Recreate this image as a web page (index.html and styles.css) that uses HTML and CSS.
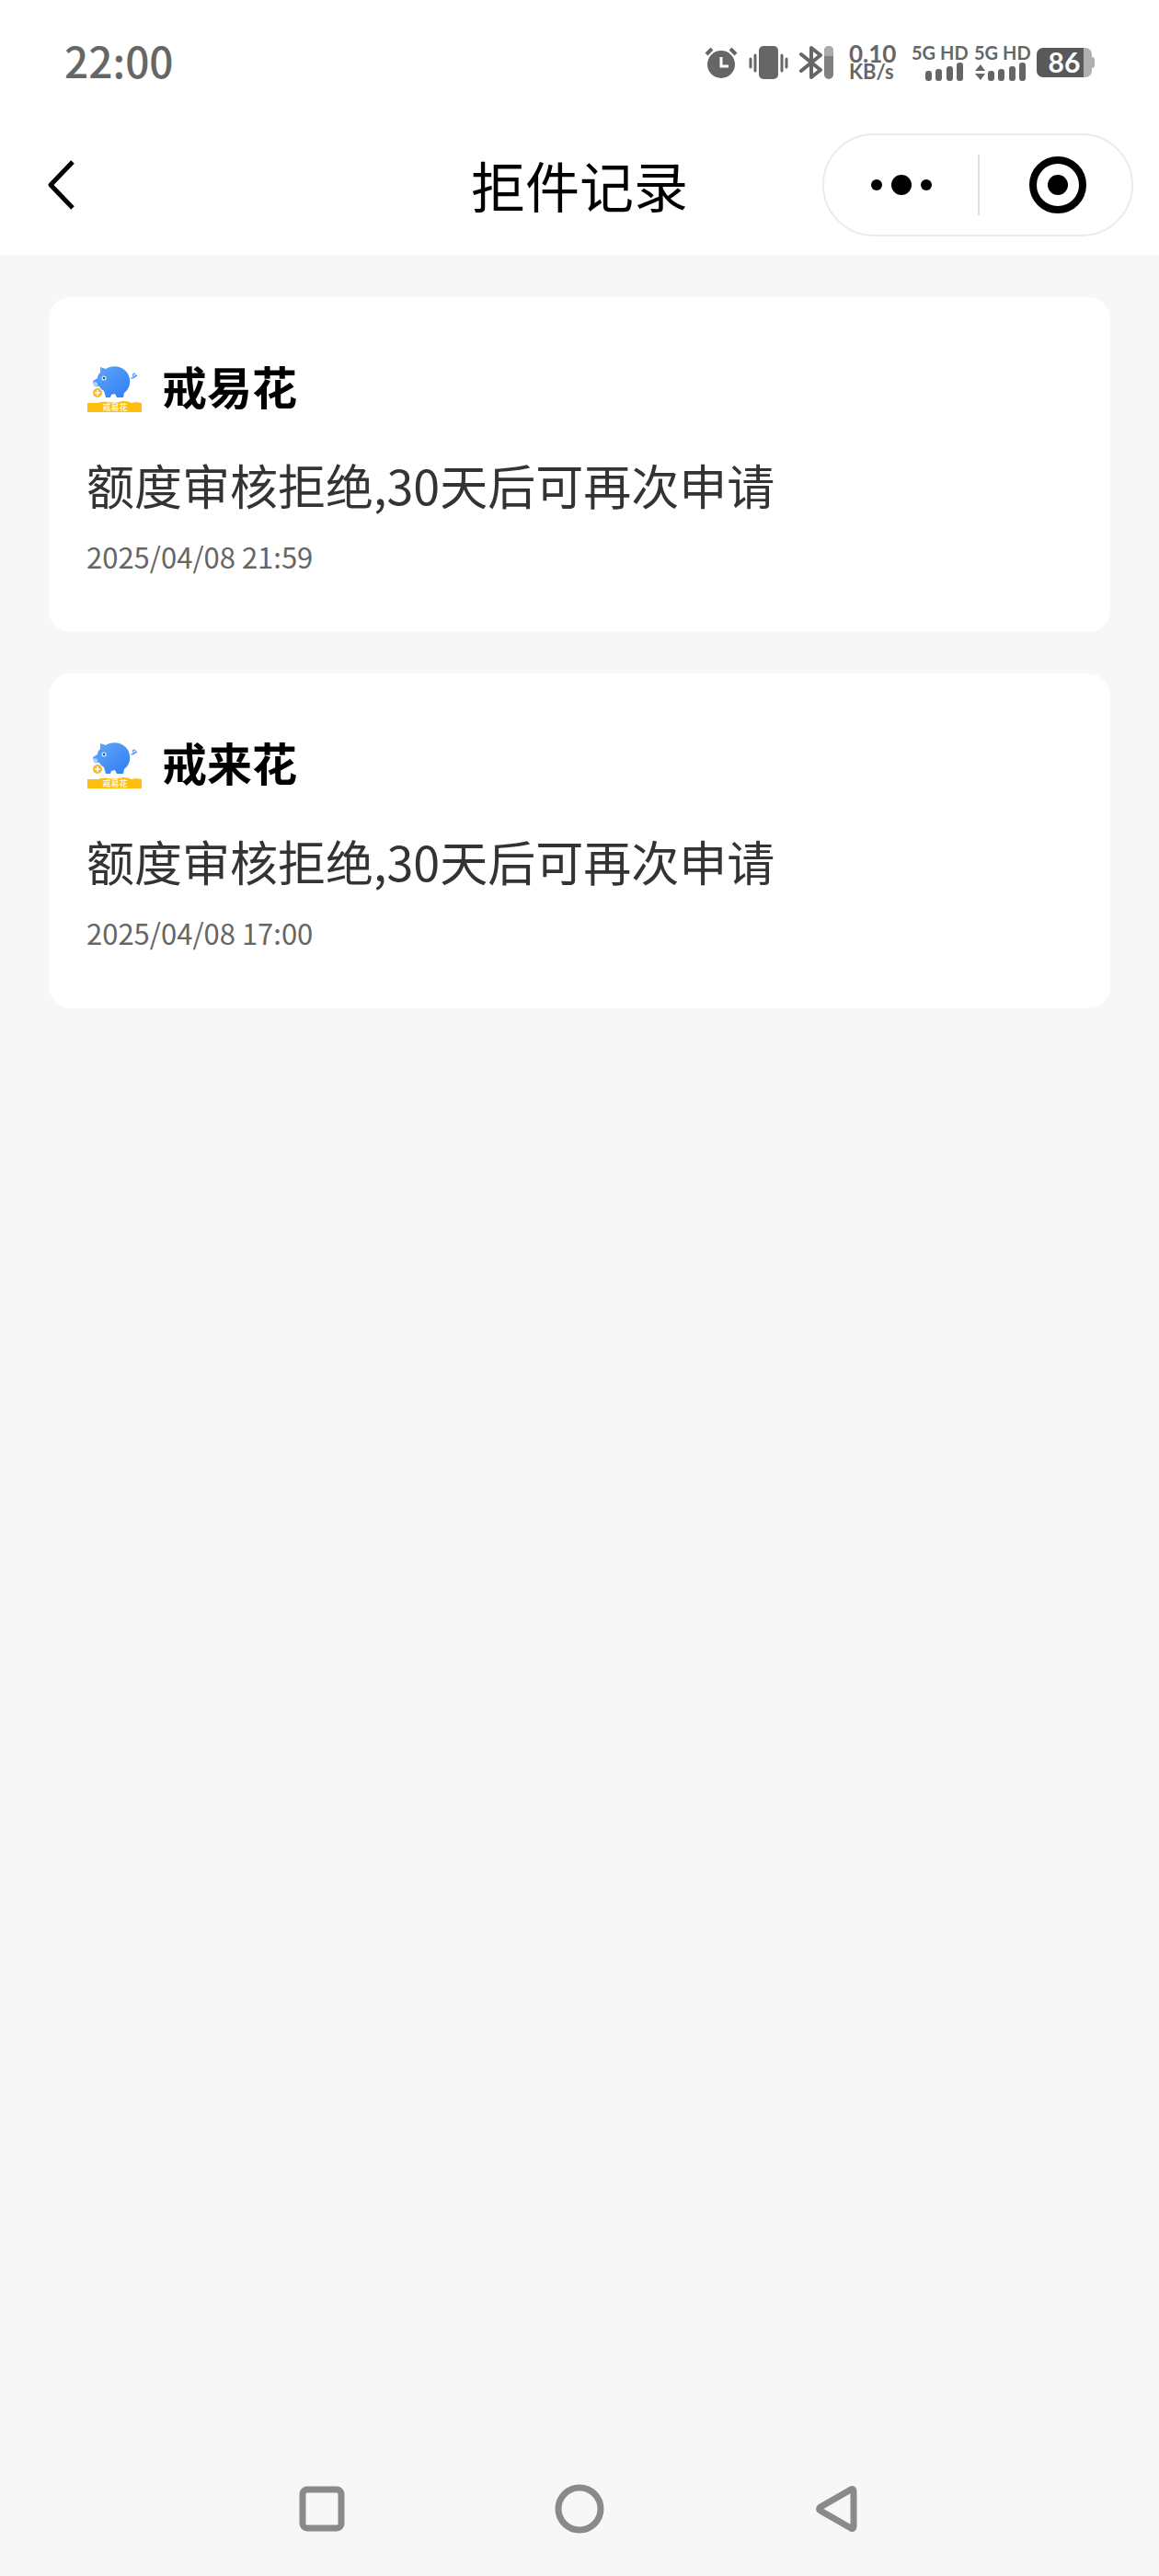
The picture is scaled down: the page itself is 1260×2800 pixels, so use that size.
FILE: index.html
```html
<!DOCTYPE html>
<html lang="zh-CN">
<head>
    <meta charset="UTF-8">
    <meta name="viewport" content="width=device-width, initial-scale=1.0">
    <title>拒件记录</title>
    <link rel="stylesheet" href="styles.css">
</head>
<body>

    <header class="header">
        <div class="status-bar">
            <time class="clock">22:00</time>
            <div class="status-icons">
                <svg width="36" height="36" viewBox="0 0 36 36" role="img" aria-label="闹钟">
                    <circle cx="18" cy="20" r="15" fill="#666"/>
                    <path d="M2 9l6-6M34 9l-6-6" stroke="#666" stroke-width="4"/>
                    <path d="M18 12v10h8" fill="none" stroke="#fff" stroke-width="3"/>
                </svg>
                <svg width="44" height="36" viewBox="0 0 44 36" role="img" aria-label="振动">
                    <rect x="12" y="0" width="21" height="36" rx="5" fill="#666"/>
                    <path d="M3 14v9M8 10v17M37 10v17M42 14v9" stroke="#666" stroke-width="3" stroke-linecap="round"/>
                </svg>
                <svg width="38" height="36" viewBox="0 0 38 36" role="img" aria-label="蓝牙">
                    <path d="M3 9l21 17-10 8V2l10 8L3 27" fill="none" stroke="#666" stroke-width="4" stroke-linecap="round" stroke-linejoin="round"/>
                    <rect x="28" y="0" width="10" height="36" rx="5" fill="#808080"/>
                    <path d="M28 11V5a5 5 0 0 1 10 0v6z" fill="#aaa"/>
                </svg>
                <div class="net-speed">
                    <span class="speed-value">0.10</span>
                    <span class="speed-unit">KB/s</span>
                </div>
                <div class="signal">
                    <span>5G HD</span>
                    <svg width="57" height="20" viewBox="0 0 57 20" aria-hidden="true">
                        <g fill="#666">
                            <rect x="15" y="9" width="7" height="11" rx="3"/>
                            <rect x="26" y="7" width="7" height="13" rx="3"/>
                            <rect x="38" y="4" width="7" height="16" rx="3"/>
                            <rect x="49" y="0" width="7" height="20" rx="3"/>
                        </g>
                    </svg>
                </div>
                <div class="signal">
                    <span>5G HD</span>
                    <svg width="57" height="20" viewBox="0 0 57 20" aria-hidden="true">
                        <g fill="#666">
                            <path d="M1 9l6-7 5 7zM1 12h11l-5 7z"/>
                            <rect x="15" y="9" width="7" height="11" rx="3"/>
                            <rect x="26" y="7" width="7" height="13" rx="3"/>
                            <rect x="38" y="4" width="7" height="16" rx="3"/>
                            <rect x="49" y="0" width="7" height="20" rx="3"/>
                        </g>
                    </svg>
                </div>
                <svg width="63" height="38" viewBox="0 -3 63 38" role="img" aria-label="电量 86%">
                    <path d="M51 0h2a7 7 0 0 1 7 7v3a3 3 0 0 1 3 3v6a3 3 0 0 1-3 3v3a7 7 0 0 1-7 7h-2z" fill="#b0b0b0"/>
                    <path d="M7 0h44v32H7a7 7 0 0 1-7-7V7a7 7 0 0 1 7-7z" fill="#595959"/>
                    <text x="30" y="27" class="battery-text">86</text>
                </svg>
            </div>
        </div>

        <nav class="nav-bar">
            <button class="back" aria-label="返回">
                <svg width="32" height="56" viewBox="0 0 32 56">
                    <path d="M29 3L5 28l24 25" fill="none" stroke="#000" stroke-width="5" stroke-linejoin="round"/>
                </svg>
            </button>
            <h1>拒件记录</h1>
            <div class="capsule">
                <button aria-label="更多">
                    <svg width="66" height="22" viewBox="0 0 66 22">
                        <circle cx="6" cy="11" r="6"/>
                        <circle cx="33" cy="11" r="11"/>
                        <circle cx="60" cy="11" r="6"/>
                    </svg>
                </button>
                <button aria-label="关闭">
                    <svg width="62" height="62" viewBox="0 0 62 62">
                        <circle cx="31" cy="31" r="27" fill="none" stroke="#000" stroke-width="8"/>
                        <circle cx="31" cy="31" r="11"/>
                    </svg>
                </button>
            </div>
        </nav>
    </header>

    <main class="records">
        <article class="card">
            <div class="card-head">
                <svg class="logo" viewBox="0 -3 60 60" role="img" aria-label="戒易花">
                    <defs>
                        <linearGradient id="pigBlue" x1="0" y1="0" x2="1" y2="1">
                            <stop offset="0" stop-color="#62a8fb"/>
                            <stop offset="1" stop-color="#2f7df2"/>
                        </linearGradient>
                    </defs>
                    <path d="M48 19c3 0 6-1 5-4-1-2-4 0-2 2 1 1 3 0 4-1" fill="none" stroke="#5d9bf0" stroke-width="1.2"/>
                    <path d="M15 7l6 2c9-6 24-2 26 11 1 7-2 12-6 15l-1 5h-7l-2-4-4 1-1 3h-5l-2-7c-2-1-4-3-5-5l-6-1-1-5 5-3c0-3 1-4 3-6z" fill="url(#pigBlue)"/>
                    <path d="M8 23l4 1v5l-4-1z" fill="#a8d0ff"/>
                    <circle cx="19" cy="19" r="2.6" fill="#cfe4ff"/>
                    <circle cx="19" cy="19" r="1.2" fill="#274a7c"/>
                    <circle cx="12" cy="35" r="5" fill="#f5b82e"/>
                    <path d="M12 32v6M9 35h6" stroke="#fff" stroke-width="1.6"/>
                    <path d="M1 46h12c8-3 15 1 22-1 6-2 10-1 14 1l5-1 6 1v10H1z" fill="#fdbf10"/>
                    <text x="31" y="54" class="logo-text">戒易花</text>
                </svg>
                <h2>戒易花</h2>
            </div>
            <p class="reason">额度审核拒绝,30天后可再次申请</p>
            <time class="date">2025/04/08 21:59</time>
        </article>

        <article class="card">
            <div class="card-head">
                <svg class="logo" viewBox="0 -3 60 60" role="img" aria-label="戒易花">
                    <path d="M48 19c3 0 6-1 5-4-1-2-4 0-2 2 1 1 3 0 4-1" fill="none" stroke="#5d9bf0" stroke-width="1.2"/>
                    <path d="M15 7l6 2c9-6 24-2 26 11 1 7-2 12-6 15l-1 5h-7l-2-4-4 1-1 3h-5l-2-7c-2-1-4-3-5-5l-6-1-1-5 5-3c0-3 1-4 3-6z" fill="url(#pigBlue)"/>
                    <path d="M8 23l4 1v5l-4-1z" fill="#a8d0ff"/>
                    <circle cx="19" cy="19" r="2.6" fill="#cfe4ff"/>
                    <circle cx="19" cy="19" r="1.2" fill="#274a7c"/>
                    <circle cx="12" cy="35" r="5" fill="#f5b82e"/>
                    <path d="M12 32v6M9 35h6" stroke="#fff" stroke-width="1.6"/>
                    <path d="M1 46h12c8-3 15 1 22-1 6-2 10-1 14 1l5-1 6 1v10H1z" fill="#fdbf10"/>
                    <text x="31" y="54" class="logo-text">戒易花</text>
                </svg>
                <h2>戒来花</h2>
            </div>
            <p class="reason">额度审核拒绝,30天后可再次申请</p>
            <time class="date">2025/04/08 17:00</time>
        </article>
    </main>

    <!-- System navigation -->
    <footer class="system-nav">
        <button aria-label="最近任务">
            <svg width="56" height="56" viewBox="0 0 56 56">
                <rect x="7" y="7" width="42" height="42" rx="5"/>
            </svg>
        </button>
        <button aria-label="主屏幕">
            <svg width="56" height="56" viewBox="0 0 56 56">
                <circle cx="28" cy="28" r="23"/>
            </svg>
        </button>
        <button aria-label="返回上一级">
            <svg width="56" height="56" viewBox="0 0 56 56">
                <path d="M43 7c2-1 3 0 3 2v38c0 2-1 3-3 2L10 30q-3-2 0-4z"/>
            </svg>
        </button>
    </footer>

</body>
</html>
```
FILE: styles.css
```css
* {
    box-sizing: border-box;
}

body {
    margin: 0;
    min-height: 100vh;
    display: flex;
    flex-direction: column;
    background: #f7f7f7;
    color: #000;
    font-family: "Noto Sans CJK SC", sans-serif;
}

h1, h2, p {
    margin: 0;
}

button {
    display: flex;
    align-items: center;
    justify-content: center;
    padding: 0;
    border: none;
    background: none;
    cursor: pointer;
}

svg {
    display: block;
    flex-shrink: 0;
}

/* Header */
.header {
    background: #fff;
    padding-bottom: 11px;
}

.status-bar {
    display: flex;
    align-items: center;
    justify-content: space-between;
    height: 136px;
    padding: 0 70px;
    color: #666;
}

.clock {
    padding-bottom: 6px;
    font-size: 46px;
    font-weight: 500;
    line-height: 46px;
}

.status-icons {
    display: flex;
    align-items: center;
    gap: 11px;
    font-family: Lato, sans-serif;
    font-weight: 700;
}

.net-speed {
    display: flex;
    flex-direction: column;
    width: 52px;
    margin: 0 5px 0 6px;
}

.speed-value {
    font-size: 26px;
    line-height: 20px;
}

.speed-unit {
    font-size: 22px;
    line-height: 20px;
}

.signal {
    display: flex;
    flex-direction: column;
    gap: 2px;
    width: 57px;
    font-size: 20px;
    line-height: 18px;
    white-space: nowrap;
}

.battery-text {
    font-size: 30px;
    font-weight: 700;
    fill: #fff;
    text-anchor: middle;
}

/* Title bar */
.nav-bar {
    display: grid;
    grid-template-columns: 1fr auto 1fr;
    align-items: center;
    height: 130px;
    padding: 0 28px 0 50px;
}

.nav-bar h1 {
    font-size: 59px;
    font-weight: 400;
    line-height: 72px;
    margin-right: 22px;
}

.nav-bar .back {
    justify-self: start;
}

.capsule {
    justify-self: end;
    display: flex;
    align-items: center;
    width: 338px;
    height: 112px;
    border: 2px solid #ebebeb;
    border-radius: 56px;
}

.capsule button {
    width: 50%;
    height: 66px;
}

.capsule button + button {
    padding-left: 4px;
    border-left: 2px solid #dedede;
}

/* Cards */
.records {
    flex: 1;
    display: flex;
    flex-direction: column;
    gap: 45px;
    padding: 46px 53px;
}

.card {
    padding: 60px 41px;
    border-radius: 24px;
    background: #fff;
}

.card-head {
    display: flex;
    align-items: center;
    gap: 22px;
}

.logo {
    width: 60px;
    height: 60px;
}

.logo-text {
    font-size: 9px;
    font-weight: 700;
    fill: #fff6d6;
    text-anchor: middle;
}

.card h2 {
    font-size: 49px;
    font-weight: 700;
    line-height: 72px;
}

.reason {
    margin-top: 34px;
    color: #333;
    font-size: 52px;
    line-height: 76px;
}

.date {
    display: block;
    margin-top: 18px;
    color: #666;
    font-size: 31px;
    line-height: 44px;
}

/* System navigation */
.system-nav {
    display: grid;
    grid-template-columns: repeat(3, 1fr);
    height: 146px;
    padding: 0 calc(100% / 6);
}

.system-nav svg {
    fill: none;
    stroke: #8a8a8a;
    stroke-width: 7;
}
```
